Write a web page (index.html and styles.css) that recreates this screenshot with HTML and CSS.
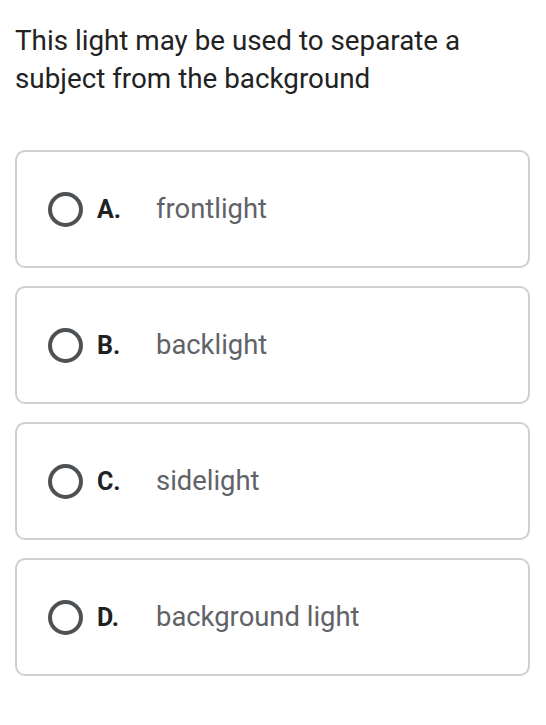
FILE: index.html
```html
<!DOCTYPE html>
<html>
<head>
<meta charset="utf-8">
<link rel="stylesheet" href="styles.css">
</head>
<body>
<div class="page">
  <p class="question">This light may be used to separate a subject from the background</p>
  <div class="options">
    <div class="option"><span class="radio"></span><span class="letter">A.</span><span class="text">frontlight</span></div>
    <div class="option"><span class="radio"></span><span class="letter">B.</span><span class="text">backlight</span></div>
    <div class="option"><span class="radio"></span><span class="letter">C.</span><span class="text">sidelight</span></div>
    <div class="option"><span class="radio"></span><span class="letter">D.</span><span class="text">background light</span></div>
  </div>
</div>
</body>
</html>
```
FILE: styles.css
```css
html, body {
  margin: 0;
  padding: 0;
  background: #fff;
}
.page {
  font-family: Roboto, "Noto Sans", sans-serif;
  padding: 22px 15px 0 15px;
  width: 515px;
}
.question {
  margin: 0;
  font-size: 27.8px;
  line-height: 38px;
  color: #222;
}
.options {
  margin-top: 52px;
  display: flex;
  flex-direction: column;
  gap: 18px;
}
.option {
  box-sizing: border-box;
  height: 118px;
  border: 2px solid #cfcfcf;
  border-radius: 10px;
  display: flex;
  align-items: center;
  padding-left: 31px;
}
.radio {
  box-sizing: border-box;
  width: 35px;
  height: 35px;
  border: 4px solid #4d5154;
  border-radius: 50%;
  flex: none;
}
.letter {
  font-weight: bold;
  font-size: 25px;
  color: #202124;
  margin-left: 14px;
  width: 59px;
}
.text {
  font-size: 27.4px;
  color: #5f6368;
}
```
